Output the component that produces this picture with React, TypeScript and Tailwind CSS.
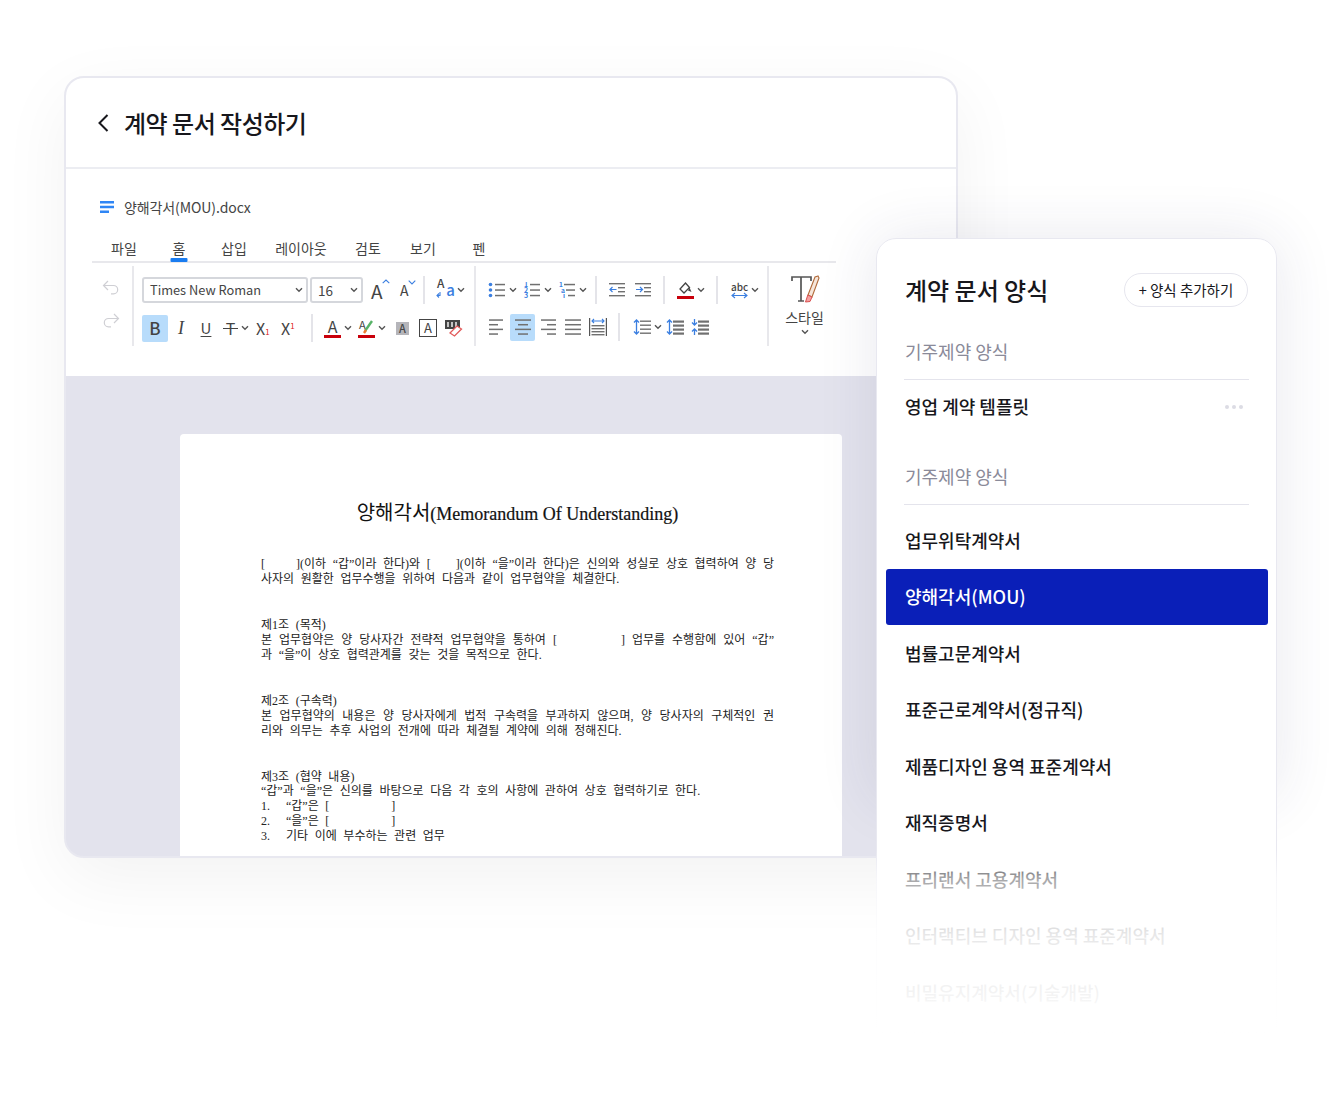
import type { ReactNode } from 'react'

const kr = "font-['Noto_Sans_CJK_KR',sans-serif]"

const tabs = [
  { label: '파일', w: 'w-[54px]' },
  { label: '홈', w: 'w-[56px]', active: true },
  { label: '삽입', w: 'w-[54px]' },
  { label: '레이아웃', w: 'w-[80px]' },
  { label: '검토', w: 'w-[54px]' },
  { label: '보기', w: 'w-[56px]' },
  { label: '펜', w: 'w-[56px]' },
]

const templates = [
  '업무위탁계약서',
  '양해각서(MOU)',
  '법률고문계약서',
  '표준근로계약서(정규직)',
  '제품디자인 용역 표준계약서',
  '재직증명서',
  '프리랜서 고용계약서',
  '인터랙티브 디자인 용역 표준계약서',
  '비밀유지계약서(기술개발)',
]

function Chev({ className = '' }: { className?: string }) {
  return (
    <svg width="8" height="6" viewBox="0 0 8 6" className={`shrink-0 ${className}`}>
      <path d="M1 1.2 4 4.2 7 1.2" fill="none" stroke="#555" strokeWidth="1.4" />
    </svg>
  )
}

function Divider({ className = '' }: { className?: string }) {
  return <div className={`h-[28px] w-[2px] shrink-0 bg-[#e4e4e9] ${className}`} />
}

function Lines({ rows, className = '' }: { rows: [number, number][]; className?: string }) {
  // align icons: each row is x + width
  return (
    <svg width="18" height="16" viewBox="0 0 18 16" className={`shrink-0 ${className}`}>
      {rows.map(([x, w], i) => (
        <rect key={i} x={x} y={1 + i * (14 / (rows.length - 1 || 1)) - 0.7} width={w} height="1.5" fill="#707070" />
      ))}
    </svg>
  )
}

function ListIcon({ kind, className = '' }: { kind: 'bullet' | 'number' | 'multi'; className?: string }) {
  const ys = [2.5, 8, 13.5]
  return (
    <svg width="18" height="16" viewBox="0 0 18 16" className={`shrink-0 ${className}`}>
      {ys.map((y, i) => (
        <g key={y}>
          {kind === 'bullet' && <circle cx="2.5" cy={y} r="1.8" fill="#3b7fe0" />}
          {kind === 'number' && (
            <text x="1" y={y + 2.5} fontSize="7" fontWeight="600" fill="#3b7fe0">
              {i + 1}
            </text>
          )}
          {kind === 'multi' && (
            <text x={1 + i * 2} y={y + 2.5} fontSize="6.5" fontWeight="600" fill="#3b7fe0">
              {['1', 'a', 'i'][i]}
            </text>
          )}
          <rect
            x={kind === 'multi' ? 6 + i * 2 : 7}
            y={y - 0.7}
            width={kind === 'multi' ? 11 - i * 2 : 10}
            height="1.5"
            fill="#707070"
          />
        </g>
      ))}
    </svg>
  )
}

function IndentIcon({ flip, className = '' }: { flip?: boolean; className?: string }) {
  return (
    <svg width="16" height="16" viewBox="0 0 16 16" className={`shrink-0 ${className}`}>
      <rect x="0" y="1" width="16" height="1.4" fill="#707070" />
      <rect x="9" y="5" width="7" height="1.4" fill="#707070" />
      <rect x="9" y="9" width="7" height="1.4" fill="#707070" />
      <rect x="0" y="13" width="16" height="1.4" fill="#707070" />
      <path
        d={flip ? 'M1 7.5H7.5M5 5 7.5 7.5 5 10' : 'M7.5 7.5H1M3.5 5 1 7.5 3.5 10'}
        fill="none"
        stroke="#3b7fe0"
        strokeWidth="1.2"
      />
    </svg>
  )
}

function LineHeight({ variant, className = '' }: { variant: 0 | 1 | 2; className?: string }) {
  return (
    <svg width="18" height="16" viewBox="0 0 18 16" className={`shrink-0 ${className}`}>
      {[1.5, 5.5, 9.5, 13.5].map((y) => (
        <rect key={y} x="7" y={y} width="11" height={variant === 0 ? 1.4 : 2.2} fill="#707070" />
      ))}
      {variant === 2 ? (
        <path d="M3.5 0V6M1 3.5 3.5 6 6 3.5M3.5 16V10M1 12.5 3.5 10 6 12.5" fill="none" stroke="#3b7fe0" strokeWidth="1.3" />
      ) : (
        <path d="M3.5 1V15M1 3.5 3.5 1 6 3.5M1 12.5 3.5 15 6 12.5" fill="none" stroke="#3b7fe0" strokeWidth="1.3" />
      )}
    </svg>
  )
}

function Toolbar() {
  return (
    <div className={`ml-[26px] flex w-[744px] text-[#444] ${kr}`}>
      <div className="mt-[3px] flex h-[80px] w-[42px] shrink-0 flex-col border-r-2 border-[#e8e8ec] pl-[10px] pt-[13px]">
        <svg width="18" height="16" viewBox="0 0 18 16">
          <path d="M6 2 1.5 6.5 6 11M1.5 6.5H11.5a4.2 4.2 0 0 1 0 8.4H9" fill="none" stroke="#cfcfd4" strokeWidth="1.2" />
        </svg>
        <svg width="18" height="16" viewBox="0 0 18 16" className="mt-[18px]">
          <path d="M12 1 16.5 5.5 12 10M16.5 5.5H6.5a4.2 4.2 0 0 0 0 8.4H9" fill="none" stroke="#cfcfd4" strokeWidth="1.2" />
        </svg>
      </div>

      <div className="mt-[3px] flex h-[80px] w-[342px] shrink-0 flex-col border-r-2 border-[#e8e8ec] pl-[8px] pt-[11px]">
        <div className="flex h-[26px] items-center">
          <div className="flex h-[26px] w-[166px] items-center justify-between rounded-[3px] border-2 border-[#d5d7dc] pl-[6px] pr-[3px] text-[12.8px]">
            Times New Roman
            <Chev />
          </div>
          <div className="ml-[2px] flex h-[26px] w-[53px] items-center justify-between rounded-[3px] border-2 border-[#d5d7dc] pl-[6px] pr-[3px] text-[13.5px]">
            16
            <Chev />
          </div>
          <div className="relative ml-[8px] w-[16px] text-[19px] leading-none">
            A
            <svg width="8" height="5" viewBox="0 0 8 5" className="absolute -right-[3px] top-[-2px]">
              <path d="M.7 4.2 4 1 7.3 4.2" fill="none" stroke="#3b7fe0" strokeWidth="1.1" />
            </svg>
          </div>
          <div className="relative ml-[13px] w-[13px] text-[14px] leading-none">
            A
            <svg width="8" height="5" viewBox="0 0 8 5" className="absolute -right-[3px] top-[-3px]">
              <path d="M.7.7 4 3.9 7.3.7" fill="none" stroke="#3b7fe0" strokeWidth="1.1" />
            </svg>
          </div>
          <Divider className="ml-[10px]" />
          <div className="relative ml-[11px] h-[24px] w-[19px]">
            <span className="absolute left-[1px] top-[-4px] text-[12px] font-medium">A</span>
            <svg width="9" height="7" viewBox="0 0 9 7" className="absolute left-[0px] top-[14px]">
              <path d="M4 0V3.5H1M3 1.5 1 3.5 3 5.5" fill="none" stroke="#3b7fe0" strokeWidth="1.1" />
            </svg>
            <span className="absolute right-[0px] top-[1px] text-[15px] font-medium text-[#3b7fe0]">a</span>
          </div>
          <Chev className="ml-[2px]" />
        </div>
        <div className="mt-[11px] flex h-[28px] items-center">
          <div className="flex h-[27px] w-[26px] items-center justify-center rounded-[2px] bg-[#b8dcfb] text-[17px] font-medium">B</div>
          <span className="ml-[8px] w-[10px] text-center font-['Liberation_Serif',serif] text-[18px] italic">I</span>
          <span className="ml-[14px] w-[12px] text-center text-[15px] underline underline-offset-2">U</span>
          <span className="relative ml-[11px] w-[15px] text-center text-[16px] leading-none">
            T
            <span className="absolute left-0 top-[8px] h-px w-[15px] bg-[#444]" />
          </span>
          <Chev className="ml-[3px]" />
          <span className="ml-[7px] w-[18px] whitespace-nowrap text-[16px] leading-none">
            X<span className="text-[8px] text-[#d22]">1</span>
          </span>
          <span className="ml-[7px] w-[18px] whitespace-nowrap text-[16px] leading-none">
            X<span className="relative top-[-6px] text-[8px] text-[#d22]">1</span>
          </span>
          <Divider className="ml-[12px]" />
          <div className="ml-[11px] flex w-[17px] flex-col items-center text-[16px] leading-[15px]">
            A
            <div className="mt-[1px] h-[3px] w-[17px] bg-[#c9000b]" />
          </div>
          <Chev className="ml-[3px]" />
          <div className="ml-[6px] flex w-[17px] flex-col items-center leading-[15px]">
            <svg width="17" height="15" viewBox="0 0 17 15">
              <text x="1" y="10" fontSize="11" fill="#444">A</text>
              <path d="M7 12 14 2" stroke="#58b368" strokeWidth="2.4" />
              <path d="M6 14 8 11" stroke="#ee7b30" strokeWidth="2.4" />
            </svg>
            <div className="mt-[1px] h-[3px] w-[17px] bg-[#c9000b]" />
          </div>
          <Chev className="ml-[3px]" />
          <div className="ml-[10px] flex h-[13px] w-[13px] items-center justify-center bg-[#b5b5ba] text-[11px] font-medium">A</div>
          <div className="ml-[10px] flex h-[18px] w-[18px] items-center justify-center border border-[#444] text-[13px]">A</div>
          <svg width="18" height="17" viewBox="0 0 18 17" className="ml-[8px]">
            <rect x="0" y="0" width="15" height="9" fill="#444" />
            <path d="M3 2v5M7 2v5M11 2v5" stroke="#eee" strokeWidth="1.5" />
            <path d="M5 13 12 6 16.5 9 9.5 16Z" fill="#fff" stroke="#e25b5b" strokeWidth="1.3" />
          </svg>
        </div>
      </div>

      <div className="mt-[3px] flex h-[80px] w-[293px] shrink-0 flex-col border-r-2 border-[#e8e8ec] pl-[12px] pt-[11px]">
        <div className="flex h-[26px] items-center">
          <ListIcon kind="bullet" />
          <Chev className="ml-[3px]" />
          <ListIcon kind="number" className="ml-[6px]" />
          <Chev className="ml-[3px]" />
          <ListIcon kind="multi" className="ml-[6px]" />
          <Chev className="ml-[3px]" />
          <Divider className="ml-[8px]" />
          <IndentIcon className="ml-[12px]" />
          <IndentIcon flip className="ml-[10px]" />
          <Divider className="ml-[12px]" />
          <div className="ml-[12px] flex w-[17px] flex-col items-center">
            <svg width="17" height="13" viewBox="0 0 17 13">
              <path d="M8.5 1 3 7l4 4 5.5-5.5Z" fill="none" stroke="#444" strokeWidth="1.3" />
              <path d="M12.5 5.5 14.5 10 11 8.5Z" fill="#444" />
            </svg>
            <div className="mt-[1px] h-[3px] w-[17px] bg-[#c9000b]" />
          </div>
          <Chev className="ml-[3px]" />
          <Divider className="ml-[11px]" />
          <div className="ml-[13px] flex w-[17px] flex-col items-center">
            <span className="text-[10px] font-medium leading-[10px]">abc</span>
            <svg width="17" height="7" viewBox="0 0 17 7">
              <path d="M1 3.5H16M4 1 1 3.5 4 6M13 1 16 3.5 13 6" fill="none" stroke="#3b7fe0" strokeWidth="1.1" />
            </svg>
          </div>
          <Chev className="ml-[3px]" />
        </div>
        <div className="mt-[10px] flex h-[28px] items-center">
          <Lines rows={[[1, 14], [1, 9], [1, 14], [1, 9]]} />
          <div className="ml-[4px] flex h-[27px] w-[25px] items-center justify-center rounded-[2px] bg-[#b8dcfb] pl-[1px]">
            <Lines rows={[[1, 16], [4, 10], [1, 16], [4, 10]]} />
          </div>
          <Lines rows={[[2, 15], [8, 9], [2, 15], [8, 9]]} className="ml-[4px]" />
          <Lines rows={[[1, 16], [1, 16], [1, 16], [1, 16]]} className="ml-[7px]" />
          <svg width="18" height="18" viewBox="0 0 18 18" className="ml-[7px]">
            <path d="M.6 0V18M17.4 0V18" stroke="#555" strokeWidth="1.2" />
            <path d="M3 3H15M5 1 3 3 5 5M13 1 15 3 13 5" fill="none" stroke="#3b7fe0" strokeWidth="1.1" />
            {[7, 10, 13, 16].map((y) => (
              <rect key={y} x="2.5" y={y} width="13" height="1.4" fill="#707070" />
            ))}
          </svg>
          <Divider className="ml-[11px]" />
          <LineHeight variant={0} className="ml-[13px]" />
          <Chev className="ml-[3px]" />
          <LineHeight variant={1} className="ml-[4px]" />
          <LineHeight variant={2} className="ml-[7px]" />
        </div>
      </div>

      <div className="mt-[3px] flex h-[80px] flex-1 flex-col items-center pl-[4px] pt-[9px]">
        <svg width="30" height="28" viewBox="0 0 30 28" className="ml-[1px]">
          <path d="M2 6V2H21V6M11 2V26M8 26H14" fill="none" stroke="#555" strokeWidth="1.7" />
          <path d="M28 1 25 2 18 20 22 22 29 3Z" fill="#f6e6da" stroke="#b06a3a" strokeWidth="1.1" />
          <path d="M17.8 20 15.5 27 20 26.5 22 22Z" fill="#f4a0a0" stroke="#d95050" strokeWidth="1" />
        </svg>
        <span className="mt-[6px] text-[14px] leading-[17px]">스타일</span>
        <Chev className="mt-[3px]" />
      </div>
    </div>
  )
}

function Justified({ children }: { children: ReactNode }) {
  return <div className="text-justify [text-align-last:justify] [word-spacing:1px]">{children}</div>
}

function Gap({ className }: { className: string }) {
  return <span className={`inline-block ${className}`} />
}

function DocPage() {
  return (
    <div className="mx-auto h-[424px] w-[662px] overflow-hidden rounded-t-[4px] bg-white pl-[81px] pr-[68px] pt-[65px] font-['Liberation_Serif','Noto_Sans_CJK_KR',serif] text-[12px] leading-[15px] text-[#222] [word-spacing:3.6px]">
      <div className="h-[28px] text-center text-[18px] leading-[28px] text-[#111] [word-spacing:0px] [-webkit-text-stroke:0.2px_#111]">
        <span className="text-[20px] [-webkit-text-stroke:0px]">양해각서</span>(Memorandum Of Understanding)
      </div>
      <div className="mt-[30px]">
        <Justified>[<Gap className="w-[31px]" />](이하 “갑”이라 한다)와 [<Gap className="w-[25px]" />](이하 “을”이라 한다)은 신의와 성실로 상호 협력하여 양 당</Justified>
        <div>사자의 원활한 업무수행을 위하여 다음과 같이 업무협약을 체결한다.</div>
      </div>
      <div className="mt-[31px]">
        <div>제1조 (목적)</div>
        <Justified>본 업무협약은 양 당사자간 전략적 업무협약을 통하여 [<Gap className="w-[64px]" />] 업무를 수행함에 있어 “갑”</Justified>
        <div>과 “을”이 상호 협력관계를 갖는 것을 목적으로 한다.</div>
      </div>
      <div className="mt-[31px]">
        <div>제2조 (구속력)</div>
        <Justified>본 업무협약의 내용은 양 당사자에게 법적 구속력을 부과하지 않으며, 양 당사자의 구체적인 권</Justified>
        <div>리와 의무는 추후 사업의 전개에 따라 체결될 계약에 의해 정해진다.</div>
      </div>
      <div className="mt-[31px]">
        <div>제3조 (협약 내용)</div>
        <div className="-mt-[1px]">“갑”과 “을”은 신의를 바탕으로 다음 각 호의 사항에 관하여 상호 협력하기로 한다.</div>
        <div className="flex"><span className="w-[25px]">1.</span><span className="whitespace-pre">“갑”은 [</span><span className="ml-[62px]">]</span></div>
        <div className="flex"><span className="w-[25px]">2.</span><span className="whitespace-pre">“을”은 [</span><span className="ml-[62px]">]</span></div>
        <div className="flex"><span className="w-[25px]">3.</span><span>기타 이에 부수하는 관련 업무</span></div>
      </div>
    </div>
  )
}

function TemplatePanel() {
  return (
    <div className={`absolute left-[876px] top-[238px] h-[795px] w-[401px] ${kr}`}>
      <div className="absolute inset-x-0 top-0 h-[560px] rounded-t-[20px] shadow-[0_0_60px_rgba(50,50,100,0.11)]" />
      <div className="relative h-full rounded-t-[20px] border border-[#e8e8f0] bg-white">
        <div className="flex items-center justify-between pl-[28px] pr-[28px] pt-[34px]">
          <div className="text-[24px] font-medium leading-[34px] text-[#17171c]">계약 문서 양식</div>
          <div className="flex h-[34px] w-[124px] items-center justify-center rounded-full border border-[#e6e6ee] text-[14.5px] text-[#17171c]">
            + 양식 추가하기
          </div>
        </div>
        <div className="mx-[27px] mt-[30px] border-b border-[#e4e4ec] pb-[14px] pl-[1px] text-[18px] leading-[28px] text-[#8a8a99]">
          기주제약 양식
        </div>
        <div className="ml-[28px] mr-[33px] mt-[12px] flex items-center justify-between text-[18px] font-medium leading-[28px] text-[#17171c]">
          영업 계약 템플릿
          <div className="mt-[2px] flex gap-[3px]">
            <div className="h-[4px] w-[4px] rounded-full bg-[#dcdce4]" />
            <div className="h-[4px] w-[4px] rounded-full bg-[#dcdce4]" />
            <div className="h-[4px] w-[4px] rounded-full bg-[#dcdce4]" />
          </div>
        </div>
        <div className="mx-[27px] mt-[42px] border-b border-[#e4e4ec] pb-[14px] pl-[1px] text-[18px] leading-[28px] text-[#8a8a99]">
          기주제약 양식
        </div>
        <div className="ml-[9px] mr-[8px] mt-[7px]">
          {templates.map((name) => (
            <div
              key={name}
              className={
                name === '양해각서(MOU)'
                  ? 'flex h-[56.5px] items-center rounded-[3px] bg-[#0a1fb8] pl-[19px] text-[18px] font-medium text-white'
                  : 'flex h-[56.5px] items-center pl-[19px] text-[18px] font-medium text-[#17171c]'
              }
            >
              {name}
            </div>
          ))}
        </div>
        <div className="absolute inset-x-[-1px] bottom-[-1px] h-[184px] bg-[linear-gradient(to_bottom,rgba(255,255,255,0)_0%,rgba(255,255,255,0.62)_16%,rgba(255,255,255,0.9)_47%,rgba(255,255,255,0.95)_78%,rgba(255,255,255,1)_100%)]" />
      </div>
    </div>
  )
}

export default function App() {
  return (
    <div className={`relative h-[1120px] w-[1340px] overflow-hidden bg-white pl-[64px] pt-[76px] ${kr}`}>
      <div className="flex h-[782px] w-[894px] flex-col overflow-hidden rounded-[20px] border-2 border-[#e8e8f0] bg-[#e3e3ed] shadow-[0_20px_70px_rgba(0,0,0,0.055)]">
        <div className="flex h-[91px] shrink-0 items-center border-b-2 border-[#ecedf2] bg-white pl-[32px]">
          <svg width="11" height="18" viewBox="0 0 11 18">
            <path d="M9.5 1 1.5 9l8 8" fill="none" stroke="#17171c" strokeWidth="2" />
          </svg>
          <div className="ml-[15px] text-[24px] font-medium tracking-[-0.5px] text-[#17171c]">계약 문서 작성하기</div>
        </div>
        <div className="h-[207px] shrink-0 bg-white">
          <div className="flex h-[40px] items-center pl-[34px] pt-[36px]">
            <svg width="14" height="12" viewBox="0 0 14 12">
              <path d="M0 0h14v2.5H0zM0 4.7h14v2.5H0zM0 9.5h9v2.5H0z" fill="#2f86f5" />
            </svg>
            <span className="ml-[10px] text-[14px] tracking-[-0.1px] text-[#444]">양해각서(MOU).docx</span>
          </div>
          <div className="ml-[26px] mt-[29px] flex h-[25px] w-[744px] border-b-2 border-[#e8e8ec] pl-[5px]">
            {tabs.map((t) => (
              <div key={t.label} className={`relative text-center text-[14px] leading-[20px] text-[#444] ${t.w}`}>
                {t.label}
                {t.active && <div className="absolute left-1/2 top-[20px] h-[4px] w-[17px] -translate-x-1/2 rounded-[1px] bg-[#1a7cf0]" />}
              </div>
            ))}
          </div>
          <Toolbar />
        </div>
        <div className="flex-1 pt-[58px]">
          <DocPage />
        </div>
      </div>
      <TemplatePanel />
    </div>
  )
}
